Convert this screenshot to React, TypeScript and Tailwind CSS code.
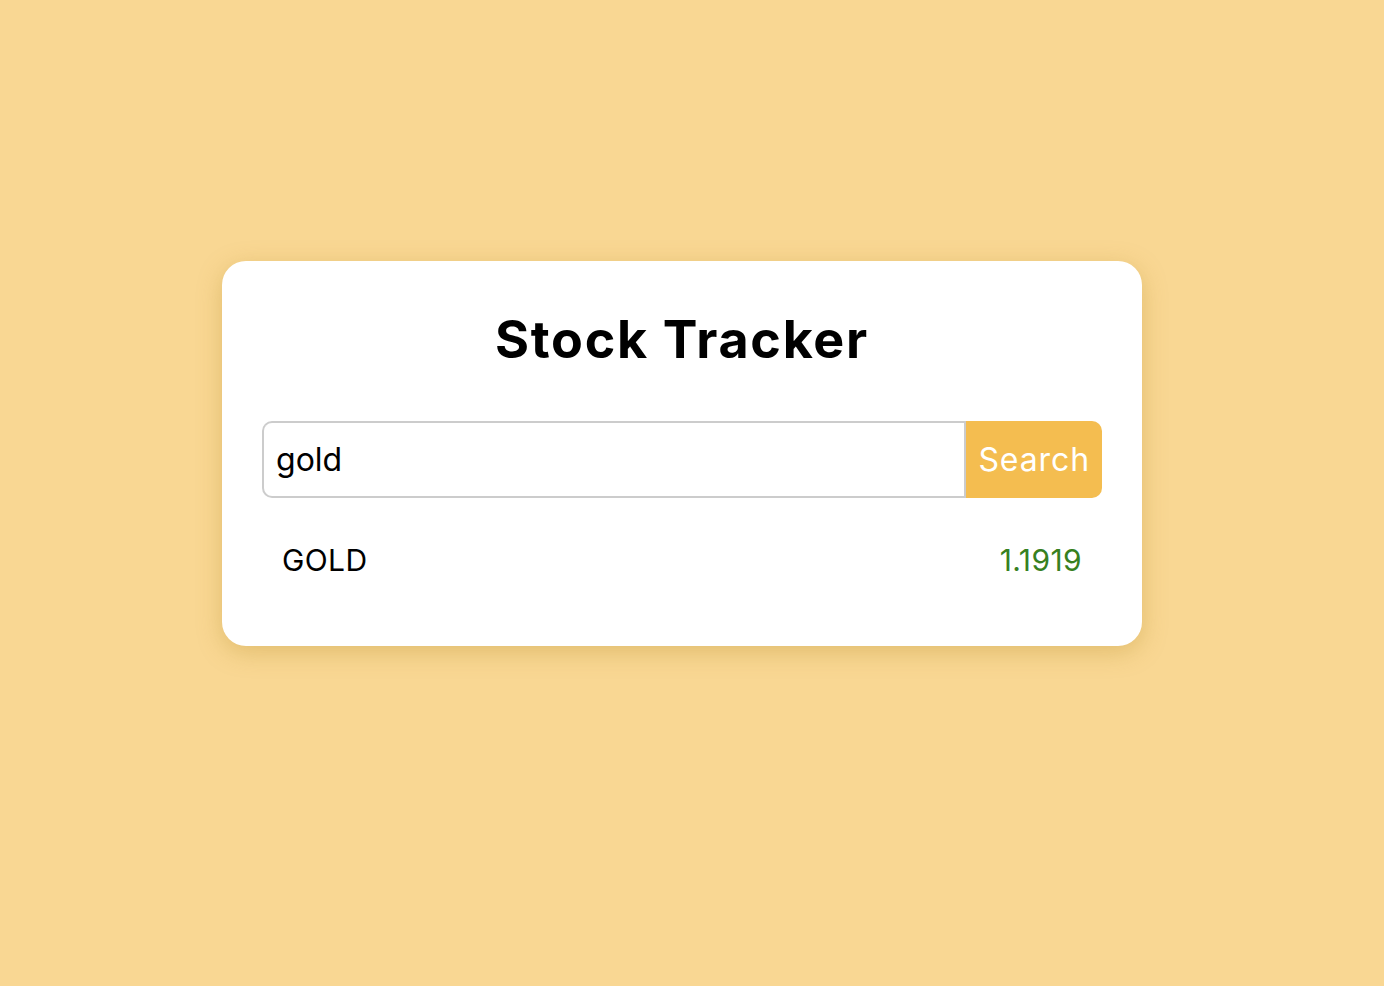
export default function App() {
  const results = [{ symbol: "GOLD", price: "1.1919" }];

  return (
    <div
      className="min-h-screen w-full bg-[#f9d793] flex items-start justify-center pt-[261px] pr-[20px]"
      style={{ fontFamily: "Inter, 'Open Sans', sans-serif" }}
    >
      <div className="w-[920px] bg-white rounded-[24px] shadow-[0_6px_24px_rgba(180,140,40,0.35)] px-10 pt-[43px] pb-[58px]">
        <h1 className="text-[52px] font-bold text-black text-center leading-[72px] tracking-[1.7px]">
          Stock Tracker
        </h1>

        {/* search bar */}
        <div className="flex mt-[45px] h-[77px]">
          <input
            defaultValue="gold"
            className="flex-1 min-w-0 border-2 border-[#cccccc] border-r-0 rounded-l-[10px] px-3 text-[32px] text-black outline-none"
          />
          <button className="bg-[#f4bd50] text-white text-[32px] tracking-[0.9px] px-3 rounded-r-[10px] border-l-2 border-[#cccccc]">
            Search
          </button>
        </div>

        {/* results */}
        <ul className="mt-[35px]">
          {results.map((r) => (
            <li
              key={r.symbol}
              className="flex justify-between items-center px-5 py-[5px] text-[30px] tracking-[0.4px] leading-[45px]"
            >
              <span className="text-black">{r.symbol}</span>
              <span className="text-[#37801f]">{r.price}</span>
            </li>
          ))}
        </ul>
      </div>
    </div>
  );
}
